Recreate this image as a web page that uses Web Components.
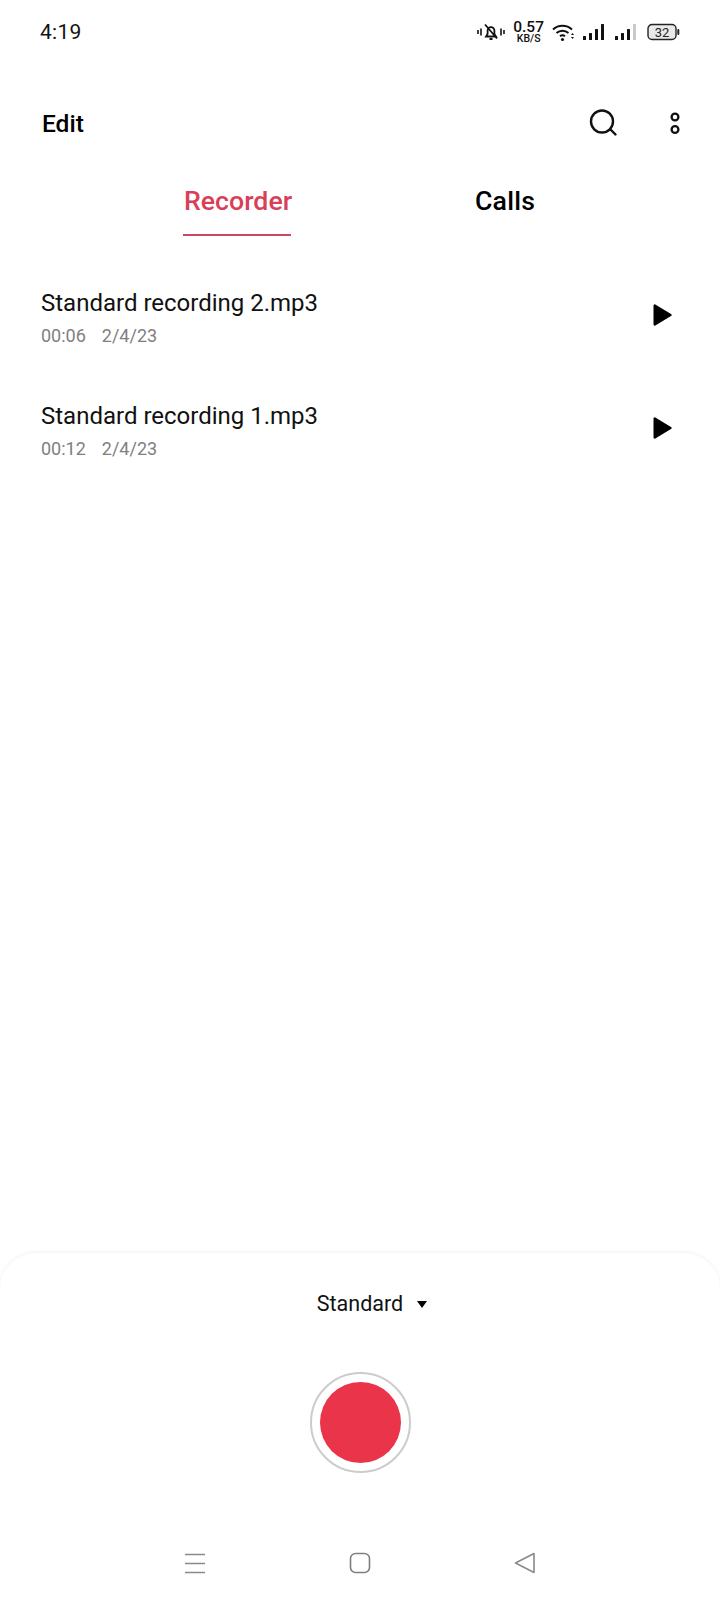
<!DOCTYPE html>
<html><head><meta charset="utf-8">
<style>
html,body{margin:0;padding:0;background:#fff}
body{width:720px;height:1600px;font-family:Roboto,"Liberation Sans",sans-serif;color:#000;overflow:hidden}
rec-app{height:1600px}
</style></head>
<body>
<rec-app>
  <status-bar slot="status"></status-bar>
  <top-bar slot="top"></top-bar>
  <tab-strip slot="tabs"></tab-strip>
  <rec-row slot="list" name="Standard recording 2.mp3" dur="00:06" date="2/4/23"></rec-row>
  <rec-row slot="list" name="Standard recording 1.mp3" dur="00:12" date="2/4/23"></rec-row>
  <rec-sheet slot="sheet"></rec-sheet>
</rec-app>
<script>
function def(name,html,init){
  customElements.define(name,class extends HTMLElement{
    constructor(){super();this.attachShadow({mode:'open'}).innerHTML=typeof html==='function'?html(this):html;}
    connectedCallback(){if(init)init(this);}
  });
}
def('rec-app',`<style>:host{display:flex;flex-direction:column;width:720px}
.list{display:flex;flex-direction:column;padding-top:26px}.sp{flex:1}</style>
<slot name="status"></slot><slot name="top"></slot><slot name="tabs"></slot>
<div class="list"><slot name="list"></slot></div><div class="sp"></div><slot name="sheet"></slot>`);

def('status-bar',`<style>:host{display:flex;align-items:center;justify-content:space-between;height:62px;padding:2px 40px 0 40px;box-sizing:border-box}
.t{font-size:21px;letter-spacing:.3px;color:#111}
.r{display:flex;align-items:center}
svg{display:block}
.sp{display:flex;flex-direction:column;align-items:center;line-height:1;margin:0 8px 0 8px;color:#111}
.sp b{font-weight:500;font-size:15.5px;line-height:13px}.sp i{font-style:normal;font-weight:500;font-size:10.5px;line-height:9px}
</style>
<span class="t">4:19</span>
<div class="r">
<svg width="28" height="20" viewBox="0 0 28 20" fill="none" stroke="#111" stroke-width="1.8"><path d="M1 8v4M4 6.5v7M24 6.5v7M27 8v4" stroke-width="1.6"/><path d="M9 14.5h10l-1.6-2.5V8.5a3.4 3.4 0 0 0-6.8 0V12zM8 2.5l12 14M12.5 17h3"/></svg>
<div class="sp"><b>0.57</b><i>KB/S</i></div>
<svg width="24" height="20" viewBox="0 0 24 20" fill="none" stroke="#111" stroke-width="2" style="margin-right:6px"><path d="M1 7.5a14 14 0 0 1 19 0M4.5 11a9 9 0 0 1 12 0M8 14.3a4 4 0 0 1 5 0"/><circle cx="10.5" cy="17.5" r="1.6" fill="#111" stroke="none"/><path d="M19 13l1.5-2 1.5 2zM19 15l1.5 2 1.5-2z" fill="#111" stroke="none"/></svg>
<svg width="24" height="20" viewBox="0 0 24 20" fill="#111" style="margin-right:8px"><rect x="1" y="14" width="3" height="4" rx=".5"/><rect x="7" y="11" width="3" height="7" rx=".5"/><rect x="13" y="7" width="3" height="11" rx=".5"/><rect x="19" y="2" width="3" height="16" rx=".5"/></svg>
<svg width="24" height="20" viewBox="0 0 24 20" fill="#111" style="margin-right:9px"><rect x="1" y="14" width="3" height="4" rx=".5"/><rect x="7" y="11" width="3" height="7" rx=".5"/><rect x="13" y="7" width="3" height="11" rx=".5"/><rect x="19" y="2" width="3" height="16" rx=".5" fill="#c9c9c9"/></svg>
<svg width="33" height="18" viewBox="0 0 33 18"><rect x="1" y="1.5" width="28" height="15" rx="4" fill="#e9e9e9" stroke="#222" stroke-width="1.4"/><rect x="30.3" y="6" width="2" height="6" rx="1" fill="#222"/><text x="15" y="14" font-family="Roboto" font-size="13" text-anchor="middle" fill="#222">32</text></svg>
</div>`);

def('top-bar',`<style>:host{display:flex;align-items:center;height:62px;padding:0 38px 0 42px;box-sizing:border-box;margin:30px 0 22px}
.e{font-size:24.5px;font-weight:500;flex:1}svg{display:block}</style>
<span class="e">Edit</span>
<svg width="32" height="32" viewBox="0 0 32 32" fill="none" stroke="#111" stroke-width="2.4" stroke-linecap="round" style="margin-left:0;margin-right:49px"><circle cx="15" cy="14.5" r="11"/><path d="M23.5 22.5l5 5"/></svg>
<svg width="14" height="28" viewBox="0 0 14 28" fill="none" stroke="#111" stroke-width="2.3"><circle cx="7" cy="8" r="3.4"/><circle cx="7" cy="20.500" r="3.4"/></svg>`);

def('tab-strip',`<style>:host{display:flex;height:60px;position:relative}
.tab{height:58px;font-size:26.7px;font-weight:500;line-height:50px;position:absolute;top:0}
.a{left:183px;width:108px;color:#d93f58;border-bottom:2px solid #c84a62;white-space:nowrap;text-indent:1px}.b{left:475px;letter-spacing:.2px}
</style>
<div class="tab a">Recorder</div><div class="tab b">Calls</div>`);

def('rec-row',el=>`<style>:host{display:flex;align-items:center;height:113px;padding:0 48px 0 41px;box-sizing:border-box}
.m{flex:1;display:flex;flex-direction:column}
.n{font-size:24px;line-height:34px;color:#111}
.d{font-size:18px;line-height:32px;color:#808080;display:flex;gap:16px}
svg{display:block;margin-bottom:8px}</style>
<div class="m"><div class="n">${el.getAttribute('name')}</div><div class="d"><span>${el.getAttribute('dur')}</span><span>${el.getAttribute('date')}</span></div></div>
<svg width="20" height="24" viewBox="0 0 20 24"><path d="M1.500 2.500v19a1.200 1.200 0 0 0 1.800 1L19 13a1.200 1.200 0 0 0 0-2L3.300 1.500a1.200 1.200 0 0 0-1.800 1z" fill="#000"/></svg>`);

def('rec-sheet',`<style>:host{display:flex;flex-direction:column;align-items:center;height:347px;box-sizing:border-box;border-radius:36px 36px 0 0;background:#fff;box-shadow:0 -1px 4px rgba(0,0,0,.06);padding-top:31px}
.m{display:flex;align-items:center;font-size:21.500px;line-height:40px;color:#111;height:40px;margin-left:24px}
.c{width:0;height:0;border-left:5.500px solid transparent;border-right:5.500px solid transparent;border-top:7px solid #000;margin-left:14px}
.o{width:101px;height:101px;box-sizing:border-box;border:2px solid #ccc;border-radius:50%;display:flex;align-items:center;justify-content:center;margin-top:48px}
.i{width:81px;height:81px;border-radius:50%;background:#ea3449}
.nav{display:flex;align-items:center;justify-content:center;gap:143px;margin-top:79px;width:100%;height:22px}
svg{display:block}</style>
<div class="m"><span>Standard</span><span class="c"></span></div>
<div class="o"><div class="i"></div></div>
<div class="nav">
<svg width="22" height="21" viewBox="0 0 22 21" stroke="#8a8a8a" stroke-width="1.500"><path d="M1 1.500h20M1 10.500h20M1 19.500h20"/></svg>
<svg width="22" height="22" viewBox="0 0 22 22" fill="none" stroke="#7f7f7f" stroke-width="1.600"><rect x="1.500" y="1.500" width="19" height="19" rx="5"/></svg>
<svg width="22" height="22" viewBox="0 0 22 22" fill="none" stroke="#8a8a8a" stroke-width="1.600" stroke-linejoin="round"><path d="M20 1.500v19L1.500 11z"/></svg>
</div>`);
</script>
</body></html>
